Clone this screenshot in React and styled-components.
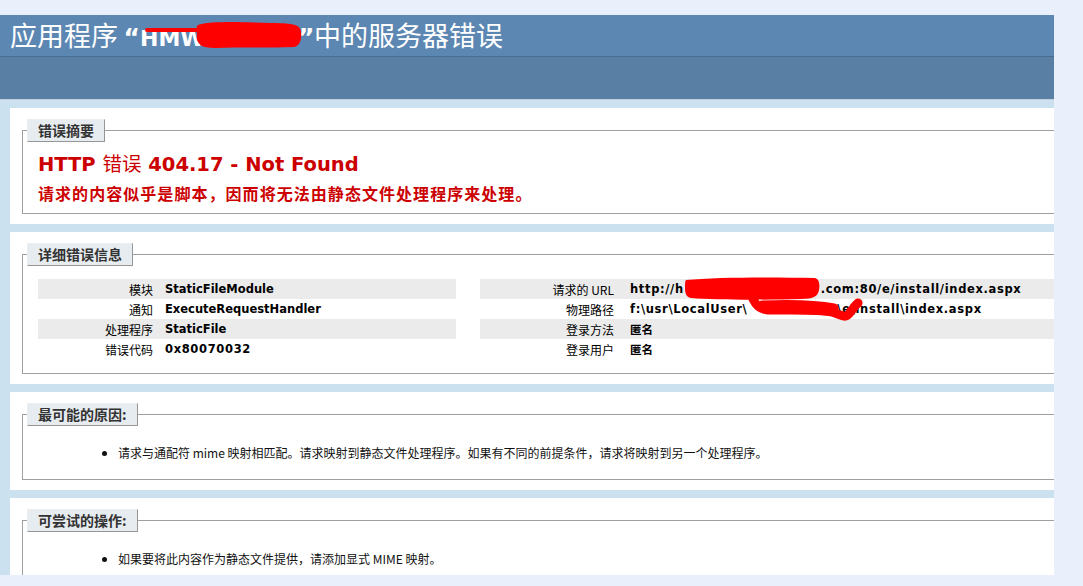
import React from 'react'
import styled, {createGlobalStyle} from 'styled-components'

const GlobalStyle = createGlobalStyle`
  html, body {
    margin: 0;
    padding: 0;
    background: #e9f0fb;
  }
`

const summary = [
  ['模块', 'StaticFileModule'],
  ['通知', 'ExecuteRequestHandler'],
  ['处理程序', 'StaticFile'],
  ['错误代码', '0x80070032', true],
]

// red marker blob drawn over the hidden part of a value
function Scrub({width, top = -8, children}) {
  return <ScrubBox $w={width} $top={top}>{children}</ScrubBox>
}

function App() {
  return (
    <>
      <GlobalStyle />
      <Page>
        <Header>
          <h1>
            应用程序<Quote $w={22} $align="right">“</Quote>
            <TitleHidden>HMW</TitleHidden>
            <Quote $w={16} $align="left">”</Quote>中的服务器错误
          </h1>
          <svg className="redact" width="320" height="41" viewBox="0 0 320 41">
            <path d="M147 15 L200 15" stroke="#f00" strokeWidth="4" strokeLinecap="round" />
            <path d="M198 10 C210 6 240 7 270 8 C290 8 300 9 301 16 C302 24 300 31 294 32 C270 33 240 32 215 33 C200 33 196 28 197 20 C197 14 196 11 198 10 Z" fill="#f00" />
          </svg>
        </Header>
        <ServerVersion />
        <Content>
          <Container>
            <Fieldset>
              <Legend>错误摘要</Legend>
              <ErrorTitle>HTTP <span className="cjk">错误</span> 404.17 - Not Found</ErrorTitle>
              <ErrorSub>请求的内容似乎是脚本，因而将无法由静态文件处理程序来处理。</ErrorSub>
            </Fieldset>
          </Container>

          <Container>
            <Fieldset>
              <Legend>详细错误信息</Legend>
              <Details>
                <Table $labelWidth={121} $pad={6}>
                  <tbody>
                    {summary.map(([k, v, wide], i) => (
                      <tr key={k} className={i % 2 === 0 ? 'alt' : ''}>
                        <th>{k}</th>
                        <Value $wide={wide}>{v}</Value>
                      </tr>
                    ))}
                  </tbody>
                </Table>
                <Table $labelWidth={142} $pad={8}>
                  <tbody>
                    <tr className="alt">
                      <th>请求的 URL</th>
                      <Value $wide>
                        http://h
                        <Scrub width={137}>
                          <svg width="150" height="26" viewBox="0 0 150 26">
                            <path d="M1 4 C30 1 90 1 130 2 C134 3 135 8 134 14 C133 20 129 23 116 23 C80 24 30 24 6 22 C1 21 0 17 0 12 C0 8 0 5 1 4 Z" fill="#f00" />
                          </svg>
                        </Scrub>
                        .com:80/e/install/index.aspx
                      </Value>
                    </tr>
                    <tr>
                      <th>物理路径</th>
                      <Value $wide>
                        f:\usr\LocalUser\
                        <Scrub width={90} top={-10}>
                          <svg width="150" height="40" viewBox="0 0 150 40">
                            <path d="M5 5 C8 11 11 15 20 16 C45 16 70 15 84 18 C91 20 94 23 98 22 C102 21 104 14 110 9" stroke="#f00" strokeWidth="9" fill="none" strokeLinecap="round" strokeLinejoin="round" />
                            <path d="M14 11 C40 10 66 10 86 14" stroke="#f00" strokeWidth="9" fill="none" strokeLinecap="round" />
                          </svg>
                        </Scrub>
                        \e\install\index.aspx
                      </Value>
                    </tr>
                    <tr className="alt">
                      <th>登录方法</th>
                      <Value>匿名</Value>
                    </tr>
                    <tr>
                      <th>登录用户</th>
                      <Value>匿名</Value>
                    </tr>
                  </tbody>
                </Table>
              </Details>
            </Fieldset>
          </Container>

          <Container>
            <Fieldset>
              <Legend>最可能的原因:</Legend>
              <List>
                <li>请求与通配符 mime 映射相匹配。请求映射到静态文件处理程序。如果有不同的前提条件，请求将映射到另一个处理程序。</li>
              </List>
            </Fieldset>
          </Container>

          <Container>
            <Fieldset>
              <Legend>可尝试的操作:</Legend>
              <List>
                <li>如果要将此内容作为静态文件提供，请添加显式 MIME 映射。</li>
              </List>
            </Fieldset>
          </Container>
        </Content>
      </Page>
    </>
  )
}

const Page = styled.div`
  width: 1054px;
  height: 560px;
  margin-top: 15px;
  overflow: hidden;
  background: #cbe1ef;
  font-family: "DejaVu Sans", "Noto Sans CJK SC", sans-serif;
  font-size: 11.5px;
  color: #000;
`

const Header = styled.div`
  position: relative;
  height: 41px;
  padding: 0 10px;
  background: #5c87b2;
  color: #fff;
  h1 {
    margin: 0;
    font-family: "Noto Sans CJK SC", sans-serif;
    font-weight: normal;
    font-size: 27px;
    line-height: 40px;
    white-space: nowrap;
  }
  .redact {
    position: absolute;
    left: 0;
    top: 0;
  }
`

const Quote = styled.span`
  display: inline-block;
  width: ${p => p.$w}px;
  text-align: ${p => p.$align};
  font-family: "DejaVu Sans", sans-serif;
  font-weight: bold;
  font-size: 25px;
`

const TitleHidden = styled.span`
  display: inline-block;
  width: 158px;
  font-family: "DejaVu Sans", sans-serif;
  font-weight: bold;
  font-size: 22px;
`

const ServerVersion = styled.div`
  height: 42px;
  background: #5a7fa5;
  border-top: 1px solid #4a6c8e;
  border-bottom: 1px solid #c1cfdd;
`

const Content = styled.div`
  padding-left: 10px;
`

const Container = styled.div`
  width: 1100px;
  margin-top: 8px;
  padding: 11px 0 10px 12px;
  background: #fff;
`

const Fieldset = styled.fieldset`
  margin: 0;
  padding: 0 15px 10px 15px;
  border: 1px solid #a0a0a0;
  min-width: 0;
`

const Legend = styled.legend`
  margin-left: -11px;
  padding: 3px 10px 4px;
  background: #e7ecf0;
  border-top: 1px solid #ededed;
  border-left: 1px solid #ededed;
  border-right: 1px solid #969696;
  border-bottom: 1px solid #969696;
  color: #333;
  font-family: "Noto Sans CJK SC", sans-serif;
  font-weight: bold;
  font-size: 14px;
  line-height: 14px;
`

const ErrorTitle = styled.h2`
  margin: 9px 0 0;
  color: #cc0000;
  font-size: 19.5px;
  line-height: 24px;
  font-weight: bold;
  .cjk {
    font-family: "Noto Sans CJK SC", sans-serif;
    font-weight: normal;
  }
`

const ErrorSub = styled.h3`
  margin: 6px 0 0;
  color: #cc0000;
  font-family: "Noto Sans CJK SC", sans-serif;
  font-size: 16px;
  line-height: 20px;
  letter-spacing: 1.05px;
  font-weight: bold;
`

const Details = styled.div`
  display: grid;
  grid-template-columns: 418px 1fr;
  column-gap: 24px;
  margin: 13px 0 4px;
`

const Table = styled.table`
  width: 100%;
  border-collapse: collapse;
  tr {
    height: 20px;
  }
  tr.alt {
    background: #ebebeb;
  }
  th {
    width: ${p => p.$labelWidth - p.$pad}px;
    padding: 0 ${p => p.$pad}px 0 0;
    text-align: right;
    font-family: "Noto Sans CJK SC", sans-serif;
    font-weight: normal;
    font-size: 12px;
    white-space: nowrap;
  }
  td {
    padding: 0 0 0 ${p => p.$pad}px;
  }
`

const Value = styled.td`
  font-weight: bold;
  white-space: nowrap;
  letter-spacing: ${p => (p.$wide ? '0.65px' : '0')};
`

const ScrubBox = styled.span`
  position: relative;
  display: inline-block;
  width: ${p => p.$w}px;
  height: 1em;
  vertical-align: middle;
  svg {
    position: absolute;
    left: 1px;
    top: ${p => p.$top}px;
  }
`

const List = styled.ul`
  margin: 19px 0 8px;
  padding-left: 80px;
  font-family: "Noto Sans CJK SC", sans-serif;
  font-size: 12px;
  line-height: 16px;
  color: #111;
`

export default App
